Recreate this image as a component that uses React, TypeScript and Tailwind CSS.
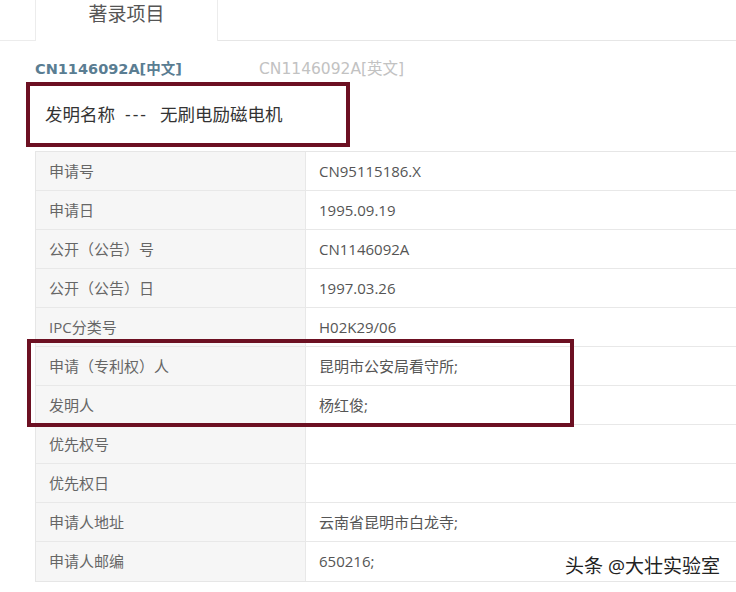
import React from "react";

const rows: [string, string][] = [
  ["申请号", "CN95115186.X"],
  ["申请日", "1995.09.19"],
  ["公开（公告）号", "CN1146092A"],
  ["公开（公告）日", "1997.03.26"],
  ["IPC分类号", "H02K29/06"],
  ["申请（专利权）人", "昆明市公安局看守所;"],
  ["发明人", "杨红俊;"],
  ["优先权号", ""],
  ["优先权日", ""],
  ["申请人地址", "云南省昆明市白龙寺;"],
  ["申请人邮编", "650216;"],
];

const font = { fontFamily: '"Open Sans", "Noto Sans CJK SC", sans-serif' };
const wide = { fontFamily: '"DejaVu Sans", "Noto Sans CJK SC", sans-serif' };

export default function App() {
  return (
    <div
      className="relative w-[736px] h-[592px] overflow-hidden bg-white"
      style={font}
    >
      {/* tab row */}
      <div className="flex h-[41px]">
        <div className="w-[35px] border-b border-[#ececec]" />
        <div className="w-[183px] border-l border-r border-[#ececec] bg-white flex items-center justify-center text-[19px] text-[#555] pb-[12px]">
          著录项目
        </div>
        <div className="flex-1 border-b border-[#e6e6e6]" />
      </div>

      {/* language links */}
      <div
        className="flex items-center h-[20px] mt-[18px] pl-[35px] leading-[20px]"
        style={wide}
      >
        <span className="w-[224px] font-bold text-[14.5px] text-[#5a7d92]">CN1146092A[中文]</span>
        <span className="text-[15.5px] text-[#c2c2c2]">CN1146092A[英文]</span>
      </div>

      {/* title box */}
      <div className="ml-[26px] mt-[3px] w-[324px] h-[65px] border-[4px] border-[#6c1022] flex items-center pl-[15px] text-[17.5px] text-[#333]">
        <span>发明名称</span>
        <span className="ml-[10px] tracking-[2px]">---</span>
        <span className="ml-[12px]">无刷电励磁电机</span>
      </div>

      {/* table */}
      <div className="ml-[35px] mt-[4px] border-t border-l border-b border-[#e6e6e6]">
        {rows.map(([k, v], i) => (
          <div
            key={i}
            className={`flex h-[39px] ${i < rows.length - 1 ? "border-b border-[#e8e8e8]" : ""}`}
          >
            <div className="w-[270px] bg-[#f6f6f6] border-r border-[#e8e8e8] flex items-center pl-[13px] text-[15px] text-[#666]">
              {k}
            </div>
            <div className="flex-1 flex items-center pl-[13px] text-[15px] text-[#555]">
              {v}
            </div>
          </div>
        ))}
      </div>

      {/* annotation box over applicant/inventor rows */}
      <div className="absolute left-[27px] top-[339px] w-[547px] h-[88px] border-[4px] border-[#6c1022]" />

      {/* watermark */}
      <div
        className="absolute left-[565px] top-[554px] text-[19px] leading-[24px] text-[#222]"
        style={{ textShadow: "0 0 2px #fff, 0 0 2px #fff" }}
      >
        头条 @大壮实验室
      </div>
    </div>
  );
}
